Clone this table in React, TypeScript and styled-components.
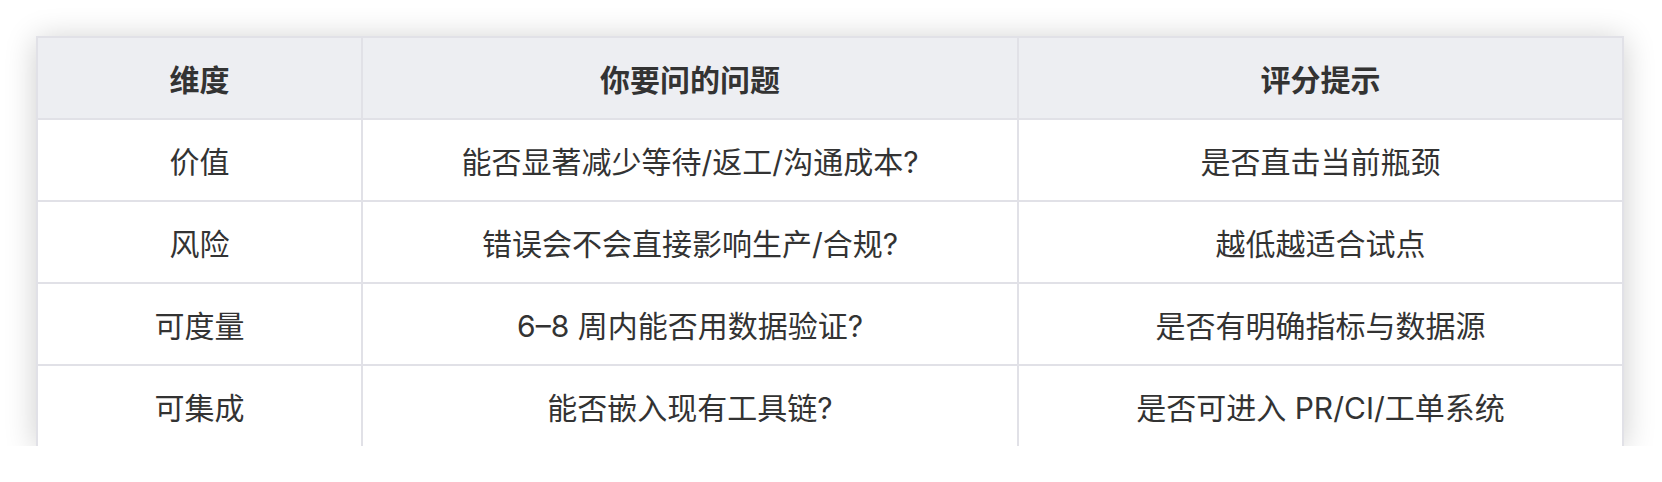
import { FC } from 'react'
import styled, { createGlobalStyle } from 'styled-components'

const GlobalStyle = createGlobalStyle`
  html, body {
    margin: 0;
    padding: 0;
    background: #ffffff;
  }
  body {
    font-family: Inter, 'Noto Sans CJK SC', sans-serif;
    color: #333333;
  }
`

const StyledPage = styled.div`
  padding: 36px 0 0 36px;
`

const StyledTable = styled.div`
  display: grid;
  grid-template-columns: 323px 654px 603px;
  gap: 2px;
  width: 1588px;
  padding: 2px 2px 0;
  box-sizing: border-box;
  background-color: #e1e1e7;
  box-shadow: 0 3px 30px rgba(0, 0, 0, 0.2);
`

const StyledCell = styled.div<{ $head?: boolean }>`
  display: flex;
  align-items: center;
  justify-content: center;
  height: 80px;
  background-color: ${({ $head }) => ($head ? '#edeef2' : '#ffffff')};
  font-size: 30px;
  font-weight: ${({ $head }) => ($head ? 700 : 400)};
  color: #333333;
  white-space: nowrap;
`

interface IRow {
  dimension: string
  question: string
  hint: string
}

const headers = ['维度', '你要问的问题', '评分提示']

const rows: IRow[] = [
  { dimension: '价值', question: '能否显著减少等待/返工/沟通成本?', hint: '是否直击当前瓶颈' },
  { dimension: '风险', question: '错误会不会直接影响生产/合规?', hint: '越低越适合试点' },
  { dimension: '可度量', question: '6–8 周内能否用数据验证?', hint: '是否有明确指标与数据源' },
  { dimension: '可集成', question: '能否嵌入现有工具链?', hint: '是否可进入 PR/CI/工单系统' },
]

const App: FC = () => (
  <>
    <GlobalStyle />
    <StyledPage>
      <StyledTable>
        {headers.map((title) => (
          <StyledCell key={title} $head>
            {title}
          </StyledCell>
        ))}
        {rows.map((row) => [
          <StyledCell key={`${row.dimension}-d`}>{row.dimension}</StyledCell>,
          <StyledCell key={`${row.dimension}-q`}>{row.question}</StyledCell>,
          <StyledCell key={`${row.dimension}-h`}>{row.hint}</StyledCell>,
        ])}
      </StyledTable>
    </StyledPage>
  </>
)

export default App
